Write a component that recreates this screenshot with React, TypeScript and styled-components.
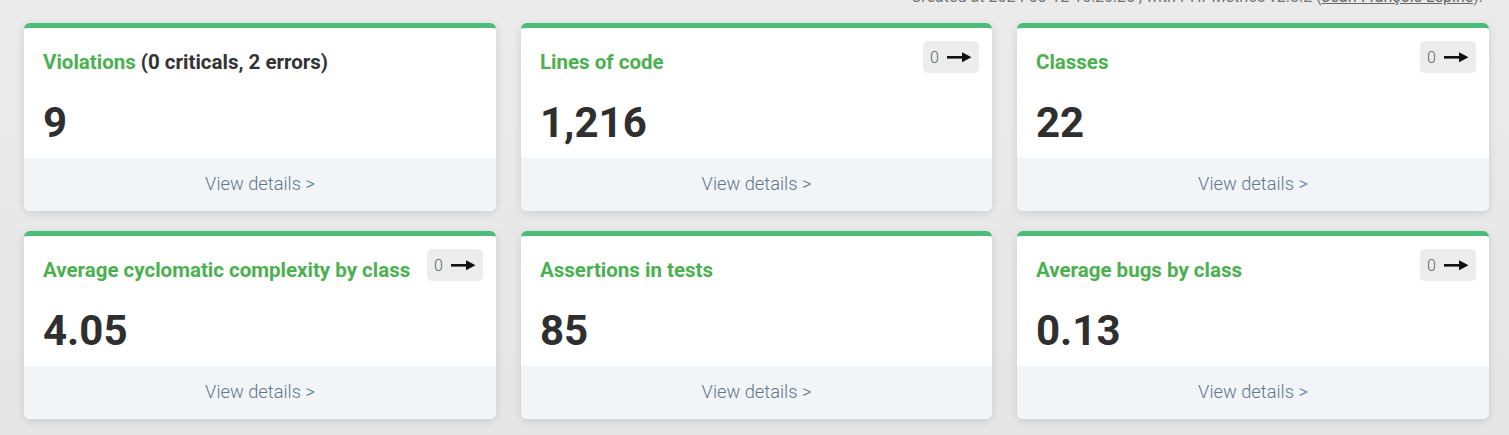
import React from "react";
import styled, { createGlobalStyle } from "styled-components";

const Global = createGlobalStyle`
  html, body { margin: 0; padding: 0; }
  body {
    background: #e9e9e9;
    font-family: Roboto, "Liberation Sans", Arial, sans-serif;
    overflow: hidden;
  }
`;

const Page = styled.div`
  width: 1509px;
  height: 435px;
  background: linear-gradient(180deg, #ebebeb 0%, #e6e6e6 100%);
  overflow: hidden;
`;

const Header = styled.div`
  display: flex;
  justify-content: flex-end;
  padding-right: 26px;
  margin-top: -12px;
  height: 18px;
  font-size: 16px;
  line-height: 18px;
  color: #777;
  white-space: nowrap;
`;

const Author = styled.a`
  color: #666;
  text-decoration: underline;
`;

const Grid = styled.div`
  display: grid;
  grid-template-columns: 472px 471px 472px;
  column-gap: 25px;
  row-gap: 20px;
  padding: 17px 20px 0 24px;
`;

const Card = styled.div`
  position: relative;
  background: #fff;
  border-top: 5px solid #4bbd78;
  border-radius: 6px;
  box-shadow: 0 2px 8px rgba(0, 0, 0, 0.13);
  overflow: hidden;
  display: flex;
  flex-direction: column;
`;

const Body = styled.div`
  padding: 23px 19px 11px 19px;
  display: flex;
  flex-direction: column;
  gap: 25px;
`;

const Title = styled.div`
  font-size: 20.5px;
  line-height: 23px;
  font-weight: 700;
  color: #333;
`;

const Label = styled.span`
  color: #4cb050;
`;

const Value = styled.div`
  font-size: 42px;
  line-height: 48px;
  font-weight: 700;
  color: #2f2f2f;
`;

const Footer = styled.a`
  display: flex;
  align-items: center;
  justify-content: center;
  height: 53px;
  padding-bottom: 2px;
  box-sizing: border-box;
  background: #f1f5f8;
  color: #64768a;
  font-size: 18.3px;
  font-weight: 300;
  text-decoration: none;
`;

const Badge = styled.div`
  position: absolute;
  top: 13px;
  right: 13px;
  width: 56px;
  height: 32px;
  box-sizing: border-box;
  background: #ececec;
  border-radius: 5px;
  display: flex;
  align-items: center;
  padding-left: 7px;
  gap: 8px;
  font-size: 16px;
  font-weight: 300;
  color: #5b6470;
`;

const Arrow = () => (
  <svg width="25" height="12" viewBox="0 0 25 12">
    <rect x="0" y="5" width="17" height="2.6" fill="#111" />
    <path d="M15 1.2 L24.5 6.3 L15 11.2 Z" fill="#111" />
  </svg>
);

type Item = { label: string; extra?: string; value: string; badge?: boolean };

const items: Item[] = [
  { label: "Violations", extra: " (0 criticals, 2 errors)", value: "9" },
  { label: "Lines of code", value: "1,216", badge: true },
  { label: "Classes", value: "22", badge: true },
  { label: "Average cyclomatic complexity by class", value: "4.05", badge: true },
  { label: "Assertions in tests", value: "85" },
  { label: "Average bugs by class", value: "0.13", badge: true },
];

export default function App() {
  return (
    <Page>
      <Global />
      <Header>
        Created at 2024-03-12 10:20:25 , with PHPMetrics v2.8.2 (<Author>Jean-François Lépine</Author>).
      </Header>
      <Grid>
        {items.map((it) => (
          <Card key={it.label}>
            {it.badge && (
              <Badge>
                0 <Arrow />
              </Badge>
            )}
            <Body>
              <Title>
                <Label>{it.label}</Label>
                {it.extra}
              </Title>
              <Value>{it.value}</Value>
            </Body>
            <Footer href="#">View details &gt;</Footer>
          </Card>
        ))}
      </Grid>
    </Page>
  );
}
